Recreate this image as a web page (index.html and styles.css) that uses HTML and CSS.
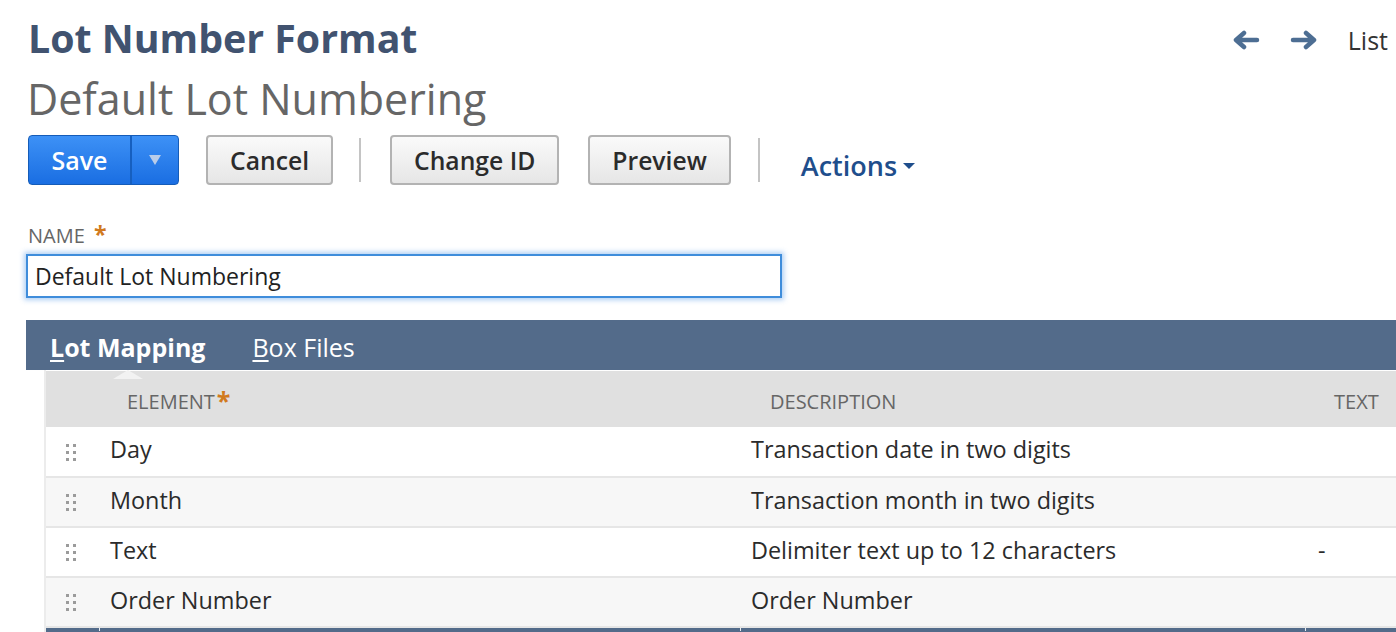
FILE: index.html
```html
<!DOCTYPE html>
<html>
<head>
<meta charset="utf-8">
<link rel="stylesheet" href="styles.css">
</head>
<body>
<div class="page">
  <div class="top">
    <div class="titles">
      <h1 class="title">Lot Number Format</h1>
      <div class="subtitle">Default Lot Numbering</div>
    </div>
    <div class="nav">
      <svg class="arrow" width="28" height="20" viewBox="0 0 28 20"><path d="M25 10H5M12 3L4 10L12 17" fill="none" stroke="#4d6e93" stroke-width="4.5" stroke-linecap="round" stroke-linejoin="round"/></svg>
      <svg class="arrow" width="28" height="20" viewBox="0 0 28 20"><path d="M3 10H23M16 3L24 10L16 17" fill="none" stroke="#4d6e93" stroke-width="4.5" stroke-linecap="round" stroke-linejoin="round"/></svg>
      <span class="list">List</span>
    </div>
  </div>

  <div class="toolbar">
    <div class="save">
      <span class="save-main">Save</span>
      <span class="save-drop"><svg width="14" height="12" viewBox="0 0 14 12"><path d="M1 1H13L7 11Z" fill="#b9cdea"/></svg></span>
    </div>
    <button class="btn">Cancel</button>
    <span class="sep"></span>
    <button class="btn">Change ID</button>
    <button class="btn">Preview</button>
    <span class="sep sep-late"></span>
    <span class="actions">Actions<svg width="12" height="8" viewBox="0 0 12 8"><path d="M0 1H12L6 7Z" fill="#1f4e8c"/></svg></span>
  </div>

  <div class="field">
    <label class="label">NAME <span class="req">*</span></label>
    <div class="input">Default Lot Numbering</div>
  </div>
</div>

<div class="tabs">
  <span class="tab active"><u>L</u>ot Mapping<span class="notch"></span></span>
  <span class="tab"><u>B</u>ox Files</span>
</div>

<div class="grid-wrap">
  <table class="grid">
    <colgroup>
      <col class="c-handle"><col class="c-el"><col class="c-desc"><col class="c-text">
    </colgroup>
    <thead>
      <tr><th></th><th class="h-el">ELEMENT<span class="req">*</span></th><th class="h-desc">DESCRIPTION</th><th class="h-text">TEXT</th></tr>
    </thead>
    <tbody>
      <tr><td class="handle"><svg class="dots" width="12" height="18" viewBox="0 0 12 18"><g fill="#9b9b9b"><rect x="1" y="1" width="3" height="3"/><rect x="8" y="1" width="3" height="3"/><rect x="1" y="8" width="3" height="3"/><rect x="8" y="8" width="3" height="3"/><rect x="1" y="15" width="3" height="3"/><rect x="8" y="15" width="3" height="3"/></g></svg></td><td>Day</td><td>Transaction date in two digits</td><td></td></tr>
      <tr class="alt"><td class="handle"><svg class="dots" width="12" height="18" viewBox="0 0 12 18"><g fill="#9b9b9b"><rect x="1" y="1" width="3" height="3"/><rect x="8" y="1" width="3" height="3"/><rect x="1" y="8" width="3" height="3"/><rect x="8" y="8" width="3" height="3"/><rect x="1" y="15" width="3" height="3"/><rect x="8" y="15" width="3" height="3"/></g></svg></td><td>Month</td><td>Transaction month in two digits</td><td></td></tr>
      <tr><td class="handle"><svg class="dots" width="12" height="18" viewBox="0 0 12 18"><g fill="#9b9b9b"><rect x="1" y="1" width="3" height="3"/><rect x="8" y="1" width="3" height="3"/><rect x="1" y="8" width="3" height="3"/><rect x="8" y="8" width="3" height="3"/><rect x="1" y="15" width="3" height="3"/><rect x="8" y="15" width="3" height="3"/></g></svg></td><td>Text</td><td>Delimiter text up to 12 characters</td><td class="dash">-</td></tr>
      <tr class="alt"><td class="handle"><svg class="dots" width="12" height="18" viewBox="0 0 12 18"><g fill="#9b9b9b"><rect x="1" y="1" width="3" height="3"/><rect x="8" y="1" width="3" height="3"/><rect x="1" y="8" width="3" height="3"/><rect x="8" y="8" width="3" height="3"/><rect x="1" y="15" width="3" height="3"/><rect x="8" y="15" width="3" height="3"/></g></svg></td><td>Order Number</td><td>Order Number</td><td></td></tr>
    </tbody>
  </table>
  <div class="bottom-bar">
    <span class="tick t1"></span><span class="tick t2"></span><span class="tick t3"></span>
  </div>
</div>
</body>
</html>
```

FILE: styles.css
```css
html, body {
  margin: 0;
  padding: 0;
  background: #fff;
  overflow: hidden;
  font-family: "Open Sans", "Noto Sans", sans-serif;
  color: #222;
}

.page {
  padding: 0 0 0 28px;
}

.top {
  display: flex;
  justify-content: space-between;
  align-items: flex-start;
}

.title {
  margin: 0;
  padding-top: 12px;
  font-size: 39.3px;
  line-height: 52px;
  font-weight: 700;
  color: #415370;
}

.subtitle {
  font-size: 43px;
  line-height: 56px;
  color: #666;
  margin-top: 7px;
  margin-left: -1px;
}

.nav {
  display: flex;
  align-items: center;
  padding-top: 23px;
  padding-right: 8px;
}

.arrow {
  margin-right: 30px;
}

.list {
  font-size: 25px;
  color: #333;
  margin-left: 0;
}

.toolbar {
  display: flex;
  align-items: center;
  margin-top: 7px;
  height: 52px;
}

.save {
  display: flex;
  height: 48px;
  border: 1px solid #155cb8;
  border-radius: 4px;
  background: linear-gradient(#3d91f6, #1a6ee2);
  color: #fff;
  font-size: 25px;
  font-weight: 600;
  overflow: hidden;
}

.save-main {
  width: 101px;
  display: flex;
  align-items: center;
  justify-content: center;
  border-right: 2px solid #165fbf;
}

.save-drop {
  width: 46px;
  display: flex;
  align-items: center;
  justify-content: center;
}

.btn {
  height: 50px;
  margin-left: 29px;
  padding: 0 22px;
  border: 2px solid #b3b3b3;
  border-radius: 4px;
  background: linear-gradient(#fafafa, #e6e6e6);
  font-family: "Open Sans", "Noto Sans", sans-serif;
  font-size: 24.7px;
  font-weight: 600;
  color: #2b2b2b;
}

.save + .btn {
  margin-left: 27px;
}

.sep {
  width: 2px;
  height: 44px;
  background: #c4c4c4;
  margin-left: 26px;
}

.sep-late {
  margin-left: 27px;
}

.sep + .btn {
  margin-left: 29px;
}

.actions {
  margin-left: 41px;
  margin-top: 10px;
  font-size: 27px;
  font-weight: 600;
  color: #1f4e8c;
  display: flex;
  align-items: center;
}

.actions svg {
  margin-left: 6px;
  margin-top: 2px;
}

.field {
  margin-top: 36px;
}

.label {
  display: block;
  font-size: 20px;
  line-height: 24px;
  color: #666;
}

.req {
  color: #d17a1e;
  font-weight: 700;
  font-size: 23px;
  margin-left: 4px;
}

.input {
  box-sizing: border-box;
  margin-left: -2px;
  margin-top: 6px;
  width: 756px;
  height: 44px;
  border: 2px solid #3f8ddb;
  box-shadow: 0 0 5px 2px rgba(80, 150, 230, 0.45);
  padding: 0 0 0 7px;
  font-size: 23px;
  line-height: 40px;
  color: #222;
}

.tabs {
  margin: 22px 0 0 26px;
  height: 50px;
  background: #536b8a;
  display: flex;
  align-items: center;
  padding-left: 24px;
}

.tab {
  position: relative;
  color: #fff;
  font-size: 25px;
  margin-right: 47px;
  padding-top: 3px;
}

.tab.active {
  font-weight: 700;
}

.tab u {
  text-decoration-thickness: 2px;
  text-underline-offset: 3px;
}

.notch {
  position: absolute;
  left: 50%;
  bottom: -15px;
  margin-left: -15px;
  width: 0;
  height: 0;
  border-left: 15px solid transparent;
  border-right: 15px solid transparent;
  border-bottom: 9px solid #f2f2f2;
}

.grid-wrap {
  margin-left: 44px;
  width: 1500px;
  border-left: 2px solid #ececec;
  padding-top: 1px;
}

.grid {
  border-collapse: collapse;
  table-layout: fixed;
  width: 1500px;
}

.c-handle { width: 54px; }
.c-el { width: 641px; }
.c-desc { width: 565px; }
.c-text { width: 240px; }

.grid th {
  height: 56px;
  background: #e0e0e0;
  font-weight: 400;
  font-size: 20px;
  color: #666;
  text-align: left;
  padding: 4px 0 0 0;
  box-sizing: border-box;
}

.h-el { padding-left: 27px !important; }
.h-el .req { font-size: 25px; margin-left: 2px; vertical-align: top; line-height: 24px; }
.h-desc { padding-left: 29px !important; }
.h-text { padding-left: 28px !important; }

.grid td {
  height: 50px;
  box-sizing: border-box;
  border-bottom: 2px solid #e6e6e6;
  font-size: 23.4px;
  color: #2b2b2b;
  padding: 0 0 5px 10px;
  background: #fff;
}

.grid tr.alt td {
  background: #f7f7f7;
}

.grid td.handle {
  padding-left: 19px;
  padding-bottom: 0;
}

.dots {
  display: block;
}

.grid td.dash {
  padding-left: 12px;
}

.bottom-bar {
  position: relative;
  height: 6px;
  background: #536b8a;
}

.tick {
  position: absolute;
  top: 0;
  width: 1px;
  height: 3px;
  background: #e8ecf2;
}

.t1 { left: 53px; }
.t2 { left: 694px; }
.t3 { left: 1259px; }
```
